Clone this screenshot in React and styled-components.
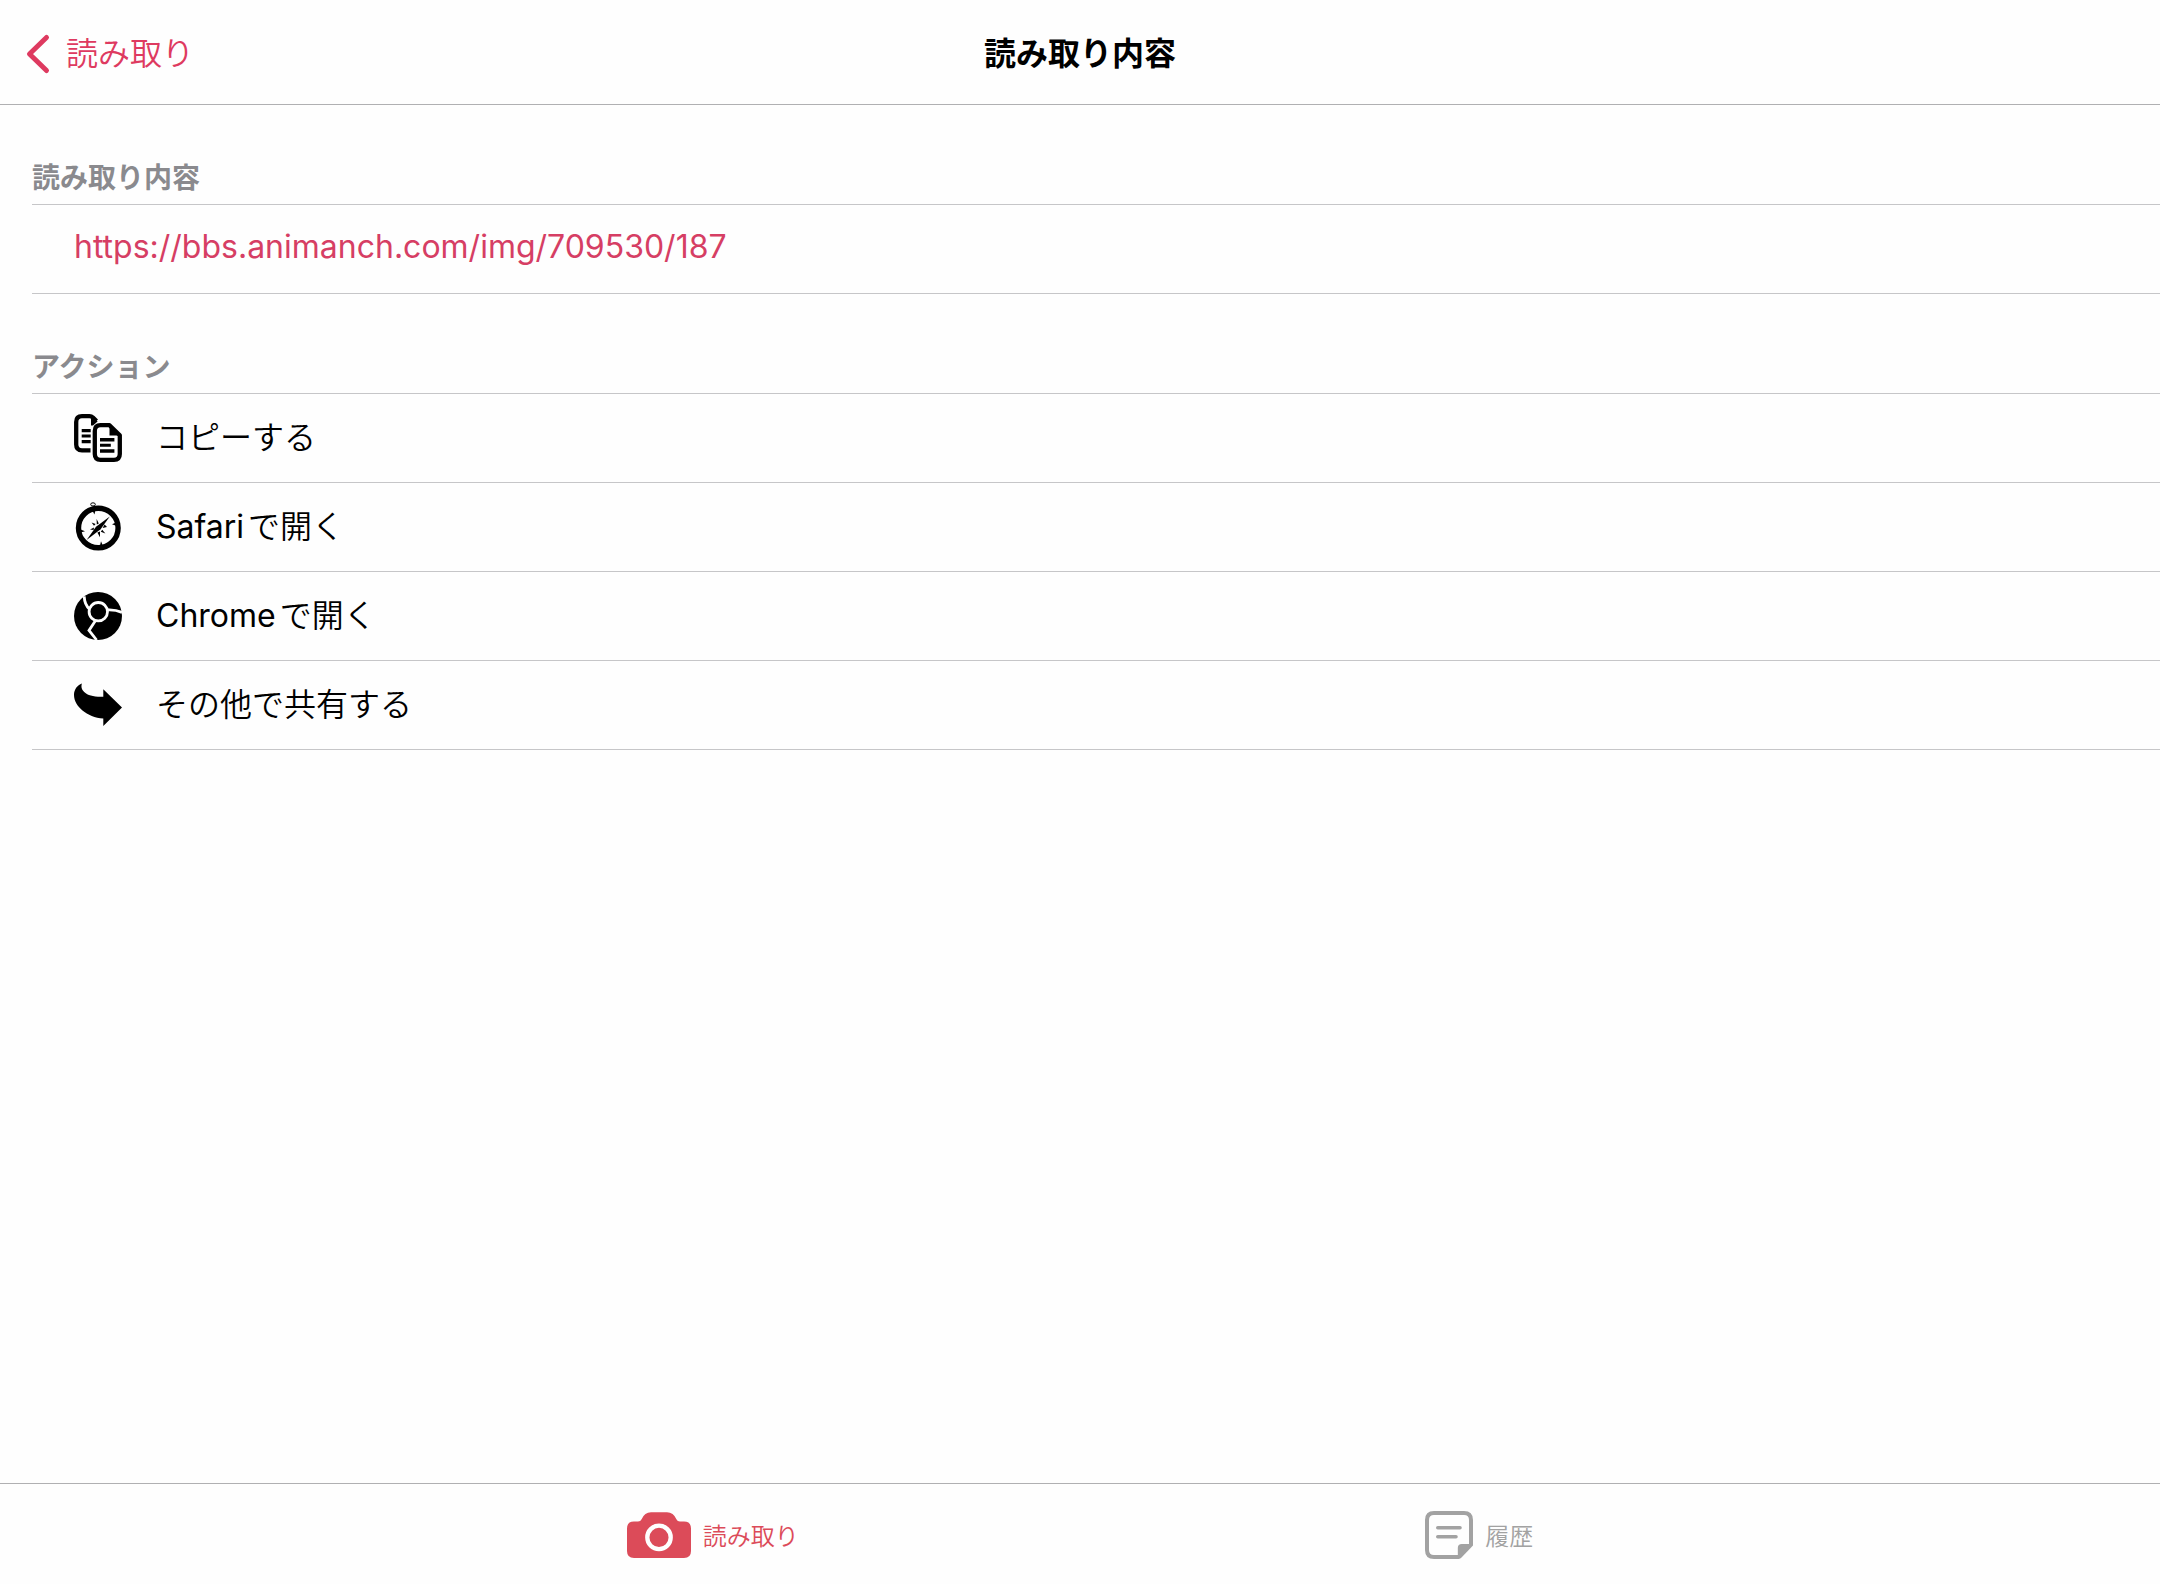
import React, { useState } from 'react';
import styled, { createGlobalStyle } from 'styled-components';

const GlobalStyle = createGlobalStyle`
  * {
    box-sizing: border-box;
  }

  body {
    margin: 0;
    background: #fefefe;
    color: #000;
    font-family: Inter, 'Noto Sans CJK JP', sans-serif;
  }
`;

const Page = styled.div`
  display: flex;
  flex-direction: column;
  min-height: 100vh;
`;

const NavBar = styled.header`
  display: grid;
  grid-template-columns: 1fr auto 1fr;
  align-items: center;
  height: 105px;
  padding: 4px 26px 0;
  border-bottom: 1px solid #b0b0b2;
`;

const NavTitle = styled.h1`
  margin: 0;
  font-size: 32px;
  font-weight: 700;
  line-height: 40px;
`;

const BackButton = styled.button`
  display: flex;
  align-items: center;
  justify-self: start;
  gap: 16px;
  padding: 0;
  border: none;
  background: none;
  color: #de3a60;
  font-family: inherit;
  font-size: 32px;
  font-weight: 350;
  line-height: 40px;
  cursor: pointer;
`;

const Content = styled.main`
  flex: 1;
  padding-left: 32px;
`;

const SectionTitle = styled.h2`
  display: flex;
  align-items: flex-end;
  height: 100px;
  margin: 0;
  padding-bottom: 6px;
  border-bottom: 1px solid #c6c6c8;
  color: #8a8a8e;
  font-size: 28px;
  font-weight: 700;
  line-height: 40px;
`;

const List = styled.ul`
  margin: 0;
  padding: 0;
  list-style: none;
`;

const Row = styled.li`
  height: 89px;
  border-bottom: 1px solid #c6c6c8;
`;

const UrlLink = styled.a`
  display: block;
  padding: 22px 42px;
  color: #d63e64;
  font-size: 32px;
  line-height: 40px;
  text-decoration: none;
`;

const ActionButton = styled.button`
  display: flex;
  align-items: center;
  gap: 34px;
  width: 100%;
  height: 100%;
  padding: 0 42px;
  border: none;
  background: none;
  color: #000;
  font-family: inherit;
  font-size: 32px;
  font-weight: 350;
  line-height: 40px;
  text-align: left;
  cursor: pointer;
`;

const AppName = styled.span`
  margin-right: 4px;
  font-weight: 400;
`;

const TabBar = styled.nav`
  display: flex;
  align-items: center;
  justify-content: space-evenly;
  height: 101px;
  border-top: 1px solid #b0b0b2;
`;

const TabButton = styled.button`
  display: flex;
  align-items: center;
  gap: 12px;
  padding: 2px 0 0;
  border: none;
  background: none;
  color: ${({ $active }) => ($active ? '#dc4b59' : '#a2a2a2')};
  font-family: inherit;
  font-size: 24px;
  font-weight: 350;
  line-height: 32px;
  cursor: pointer;
`;

const TabLabel = styled.span`
  padding-top: 4px;
`;

const Icon = styled.svg`
  flex: none;
  display: block;
  overflow: visible;
`;

const BackIcon = () => (
  <Icon width="24" height="40" viewBox="0 0 24 40" fill="none" stroke="currentColor" strokeWidth="5" strokeLinecap="round" strokeLinejoin="round">
    <path d="M20.5 3.5 L3.5 20 L20.5 36.5" />
  </Icon>
);

const CopyIcon = () => (
  <Icon width="48" height="48" viewBox="0 0 48 48">
    <path d="M16.5 36.3 H8 Q2.2 36.3 2.2 30.5 V8 Q2.2 2.2 8 2.2 H15.5 Q17.5 2.2 19 3.6 L22.5 7" fill="none" stroke="currentColor" strokeWidth="4.3" />
    <path d="M17 1 V11.6 H19 L23.6 7.4 Z" />
    <path d="M7.7 15 H16.7 V18.2 H7.7 Z M7.7 20.4 H16.7 V23.6 H7.7 Z M7.7 26 H16.7 V29.3 H7.7 Z" />
    <path d="M26.5 11.2 H35.5 L45.8 21.3 V40 Q45.8 45.8 40 45.8 H26.5 Q20.8 45.8 20.8 40 V17 Q20.8 11.2 26.5 11.2 Z" fill="#fefefe" stroke="currentColor" strokeWidth="4.3" strokeLinejoin="round" />
    <path d="M35.5 10 V21.6 H47 Z" />
    <path d="M26 24 H40.4 V27.4 H26 Z M26 29.7 H36.8 V32.8 H26 Z M26 35.3 H40.4 V38.7 H26 Z" />
  </Icon>
);

const CompassIcon = () => (
  <Icon width="48" height="48" viewBox="0 0 48 48">
    <circle cx="24.3" cy="25" r="19.8" fill="none" stroke="currentColor" strokeWidth="5.4" />
    <ellipse cx="19" cy="1.4" rx="2.3" ry="1.6" fill="none" stroke="currentColor" strokeWidth="1" />
    <path d="M18.4 7.5 H21.4 L20.4 11.6 Z M6.5 26.5 L11 28.2 L6.5 29.6 Z M26 42.5 L27 38.2 L28.8 42.5 Z M42 19.5 L38 21.2 L42 22.8 Z" />
    <path d="M35.8 13.4 L26.6 26.2 L12.6 37 L22 23.8 Z" />
    <path d="M22.6 16 L24.8 20.6 L22.8 21.6 Z M17.6 19.6 L21.6 21 L20 22.8 Z M16 26.6 L20 24.4 L19.6 27 Z M30.6 21.4 L33 24 L28.6 25 Z M31.4 30.6 L26.8 28.8 L28.2 26.8 Z M26 34.2 L23.4 29.6 L26 28.4 Z" />
  </Icon>
);

const ChromeIcon = () => (
  <Icon width="48" height="48" viewBox="0 0 48 48">
    <circle cx="24" cy="24" r="24" />
    <g fill="none" stroke="#fefefe" strokeWidth="2.8">
      <circle cx="24.3" cy="19.7" r="9.2" />
      <path d="M10.2 4.4 C10.4 9.5 12 14 15.6 17.2" />
      <path d="M33.4 17.9 Q41 17.4 48 20.4" />
      <path d="M21.4 28.8 L15 38.4 L22.6 48" />
    </g>
  </Icon>
);

const ShareIcon = () => (
  <Icon width="48" height="48" viewBox="0 0 48 48">
    <path d="M8 2.4 C5.5 8.5 11.5 16.5 29.3 15.7 V8.2 L48 26.4 L29.3 45 V37.6 C13 36.5 0 25 0 14 C0 8.5 3.2 4 8 2.4 Z" />
  </Icon>
);

const CameraIcon = () => (
  <Icon width="64" height="46" viewBox="0 0 64 46">
    <path d="M7 9.6 H11 Q13.6 9.6 14.6 7.2 Q17.6 0.2 24 0.2 H40 Q46.4 0.2 49.4 7.2 Q50.4 9.6 53 9.6 H57 Q64 9.6 64 16.6 V39 Q64 46 57 46 H7 Q0 46 0 39 V16.6 Q0 9.6 7 9.6 Z" fill="currentColor" />
    <circle cx="32" cy="25.4" r="11.7" fill="none" stroke="#fefefe" strokeWidth="4.3" />
  </Icon>
);

const HistoryIcon = () => (
  <Icon width="48" height="48" viewBox="0 0 48 48">
    <path d="M34 46 H9 Q2 46 2 39 V9 Q2 2 9 2 H39 Q46 2 46 9 V34" fill="none" stroke="currentColor" strokeWidth="4" />
    <path d="M32.8 48 V37 Q32.8 33 36.8 33 H48 V34.5 L36 47 Q35 48 32.8 48 Z" fill="currentColor" />
    <path d="M12.8 16.7 H35 M12.8 25.8 H31" fill="none" stroke="currentColor" strokeWidth="3.6" strokeLinecap="round" />
  </Icon>
);

const actions = [
  { icon: CopyIcon, label: 'コピーする' },
  { icon: CompassIcon, app: 'Safari', label: 'で開く' },
  { icon: ChromeIcon, app: 'Chrome', label: 'で開く' },
  { icon: ShareIcon, label: 'その他で共有する' },
];

const tabs = [
  { id: 'scan', icon: CameraIcon, label: '読み取り' },
  { id: 'history', icon: HistoryIcon, label: '履歴' },
];

const App = () => {
  const [activeTab, setActiveTab] = useState('scan');
  const url = 'https://bbs.animanch.com/img/709530/187';

  return (
    <Page lang="ja">
      <GlobalStyle />
      <NavBar>
        <BackButton type="button">
          <BackIcon />
          読み取り
        </BackButton>
        <NavTitle>読み取り内容</NavTitle>
      </NavBar>
      <Content>
        <section>
          <SectionTitle>読み取り内容</SectionTitle>
          <List>
            <Row>
              <UrlLink href={url}>{url}</UrlLink>
            </Row>
          </List>
        </section>
        <section>
          <SectionTitle>アクション</SectionTitle>
          <List>
            {actions.map(({ icon: ActionIcon, app, label }) => (
              <Row key={(app || '') + label}>
                <ActionButton type="button">
                  <ActionIcon />
                  <span>
                    {app && <AppName>{app}</AppName>}
                    {label}
                  </span>
                </ActionButton>
              </Row>
            ))}
          </List>
        </section>
      </Content>
      <TabBar>
        {tabs.map(({ id, icon: TabIcon, label }) => (
          <TabButton key={id} type="button" $active={id === activeTab} onClick={() => setActiveTab(id)}>
            <TabIcon />
            <TabLabel>{label}</TabLabel>
          </TabButton>
        ))}
      </TabBar>
    </Page>
  );
};

export default App;
